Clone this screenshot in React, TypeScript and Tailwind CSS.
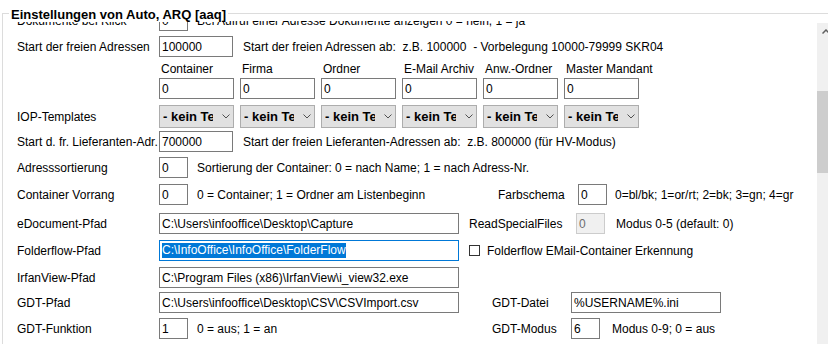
import type { ReactNode } from "react";

const cols = ["Container", "Firma", "Ordner", "E-Mail Archiv", "Anw.-Ordner", "Master Mandant"];

const Row = ({ mt, label, children }: { mt: string; label: string; children?: ReactNode }) => (
  <div className={`flex items-center h-[21px] ${mt}`}>
    <div className="w-[142px] shrink-0 whitespace-nowrap">{label}</div>
    {children}
  </div>
);

const Box = ({ w, children, className = "" }: { w: string; children?: ReactNode; className?: string }) => (
  <div
    className={`h-[21px] shrink-0 flex items-center pl-[2px] whitespace-nowrap overflow-hidden border ${w} ${
      className || "border-[#7a7a7a] bg-white"
    }`}
  >
    {children}
  </div>
);

const Dropdown = () => (
  <div className="w-[75px] h-[23px] shrink-0 bg-[#e1e1e1] border border-[#adadad] flex items-center pl-[3px] pr-[3px]">
    <span className="w-[50px] overflow-hidden whitespace-nowrap font-bold text-[13px]">- kein Template -</span>
    <svg width="8" height="5" viewBox="0 0 8 5" className="ml-auto">
      <polyline points="0.5,0.5 4,4 7.5,0.5" fill="none" stroke="#505050" strokeWidth="1" />
    </svg>
  </div>
);

export default function App() {
  return (
    <div className="w-[828px] h-[344px] overflow-hidden bg-white text-[12px] text-black font-['Liberation_Sans',Arial,sans-serif]">
      <div className="pt-[13px] pl-[2px] h-full">
        <div className="relative h-full border-l border-t border-[#dcdcdc] flex">
          {/* group title */}
          <span className="absolute left-[6px] -top-[7px] z-10 bg-white px-[2px] text-[13px] font-bold leading-[15px] whitespace-nowrap">
            Einstellungen von Auto, ARQ [aaq]
          </span>

          {/* scrolled content */}
          <div className="w-[814px] shrink-0 mt-[7px] overflow-hidden">
            <div className="-mt-[11px] pl-[14px]">
              <Row mt="mt-0" label="Dokumente bei Klick">
                <Box w="w-[29px]">0</Box>
                <span className="ml-[9px] whitespace-nowrap">Bei Aufruf einer Adresse Dokumente anzeigen 0 = nein, 1 = ja</span>
              </Row>

              <Row mt="mt-[5px]" label="Start der freien Adressen">
                <Box w="w-[74px]">100000</Box>
                <span className="ml-[10px] whitespace-nowrap">
                  Start der freien Adressen ab:&nbsp; z.B. 100000&nbsp; - Vorbelegung 10000-79999 SKR04
                </span>
              </Row>

              <div className="flex h-[21px] pl-[142px] gap-[6px]">
                {cols.map((c) => (
                  <div key={c} className="w-[75px] shrink-0 pl-[2px] pt-[3px] whitespace-nowrap">
                    {c}
                  </div>
                ))}
              </div>

              <div className="flex h-[21px] pl-[142px] gap-[6px]">
                {cols.map((c) => (
                  <Box key={c} w="w-[75px]">0</Box>
                ))}
              </div>

              <div className="flex items-center h-[23px] mt-[6px]">
                <div className="w-[142px] shrink-0">IOP-Templates</div>
                <div className="flex gap-[6px]">
                  {cols.map((c) => (
                    <Dropdown key={c} />
                  ))}
                </div>
              </div>

              <Row mt="mt-[3px]" label="Start d. fr. Lieferanten-Adr.">
                <Box w="w-[74px]">700000</Box>
                <span className="ml-[10px] whitespace-nowrap">
                  Start der freien Lieferanten-Adressen ab:&nbsp; z.B. 800000 (für HV-Modus)
                </span>
              </Row>

              <Row mt="mt-[5px]" label="Adresssortierung">
                <Box w="w-[29px]">0</Box>
                <span className="ml-[9px] whitespace-nowrap">
                  Sortierung der Container: 0 = nach Name; 1 = nach Adress-Nr.
                </span>
              </Row>

              <Row mt="mt-[6px]" label="Container Vorrang">
                <Box w="w-[29px]">0</Box>
                <span className="ml-[9px] w-[301px] shrink-0 whitespace-nowrap">0 = Container; 1 = Ordner am Listenbeginn</span>
                <span className="w-[80px] shrink-0">Farbschema</span>
                <Box w="w-[29px]">0</Box>
                <span className="ml-[8px] whitespace-nowrap">0=bl/bk; 1=or/rt; 2=bk; 3=gn; 4=gr</span>
              </Row>

              <Row mt="mt-[8px]" label="eDocument-Pfad">
                <Box w="w-[300px]">{"C:\\Users\\infooffice\\Desktop\\Capture"}</Box>
                <span className="ml-[10px] w-[107px] shrink-0">ReadSpecialFiles</span>
                <Box w="w-[29px]" className="border-[#cccccc] bg-[#f0f0f0] text-[#6d6d6d]">
                  0
                </Box>
                <span className="ml-[11px] whitespace-nowrap">Modus 0-5 (default: 0)</span>
              </Row>

              <Row mt="mt-[6px]" label="Folderflow-Pfad">
                <Box w="w-[300px]" className="border-[#0078d7] bg-white">
                  <span className="bg-[#0078d7] text-white leading-[15px]">{"C:\\InfoOffice\\InfoOffice\\FolderFlow"}</span>
                </Box>
                <span className="ml-[10px] w-[11px] h-[11px] shrink-0 border border-[#333333] bg-white" />
                <span className="ml-[7px] whitespace-nowrap">Folderflow EMail-Container Erkennung</span>
              </Row>

              <Row mt="mt-[6px]" label="IrfanView-Pfad">
                <Box w="w-[300px]">{"C:\\Program Files (x86)\\IrfanView\\i_view32.exe"}</Box>
              </Row>

              <Row mt="mt-[4px]" label="GDT-Pfad">
                <Box w="w-[300px]">{"C:\\Users\\infooffice\\Desktop\\CSV\\CSVImport.csv"}</Box>
                <span className="ml-[33px] w-[79px] shrink-0">GDT-Datei</span>
                <Box w="w-[150px]">%USERNAME%.ini</Box>
              </Row>

              <Row mt="mt-[5px]" label="GDT-Funktion">
                <Box w="w-[29px]">1</Box>
                <span className="ml-[9px] w-[295px] shrink-0 whitespace-nowrap">0 = aus; 1 = an</span>
                <span className="w-[79px] shrink-0">GDT-Modus</span>
                <Box w="w-[29px]">6</Box>
                <span className="ml-[12px] whitespace-nowrap">Modus 0-9; 0 = aus</span>
              </Row>
            </div>
          </div>

          {/* vertical scrollbar */}
          <div className="w-[17px] shrink-0 mt-[9px] bg-[#f0f0f0] flex flex-col">
            <div className="h-[17px] flex items-center justify-center">
              <svg width="8" height="5" viewBox="0 0 8 5">
                <polyline points="0.5,4.5 4,1 7.5,4.5" fill="none" stroke="#606060" strokeWidth="1.5" />
              </svg>
            </div>
            <div className="h-[51px]" />
            <div className="h-[82px] bg-[#cdcdcd]" />
          </div>
        </div>
      </div>
    </div>
  );
}
